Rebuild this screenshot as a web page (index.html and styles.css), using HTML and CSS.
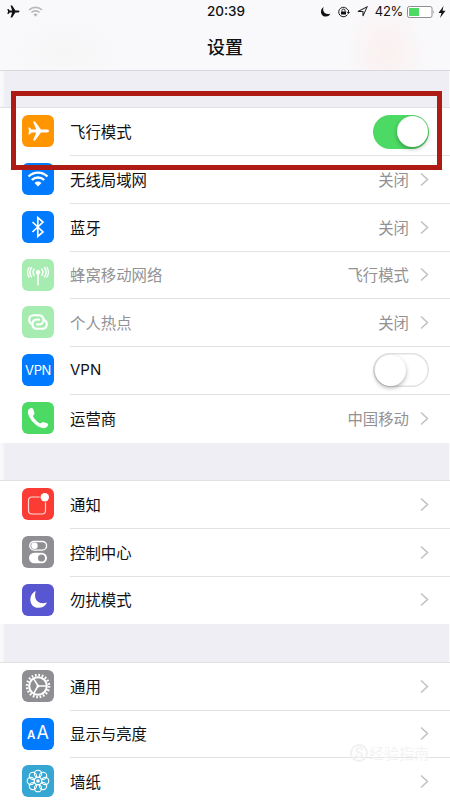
FILE: index.html
```html
<!DOCTYPE html>
<html lang="zh-CN">
<head>
<meta charset="utf-8">
<title>设置</title>
<link rel="stylesheet" href="styles.css">
</head>
<body>
<main class="screen">
  <header class="header">
    <div class="status">
      <div class="status-left">
        <svg class="st-plane" viewBox="0 0 24 24"><path d="M23 12c0-1-1-1.700-2.500-1.700h-5L9.500 1H6.500l3 9.300H5L2.800 7.500H.6L2 12 .6 16.500h2.200L5 13.700h4.500L6.500 23h3l6-9.300h5C22 13.700 23 13 23 12z"/></svg>
        <svg class="st-wifi" viewBox="0 0 24 18"><g fill="none" stroke="#b7b7b9" stroke-width="2.600"><path d="M1.500 6.500a15 15 0 0 1 21 0M5.300 10.700a9.500 9.500 0 0 1 13.400 0"/></g><path d="M8.500 14a5 5 0 0 1 7 0L12 17.500z" fill="#b7b7b9"/></svg>
      </div>
      <div class="time">20:39</div>
      <div class="status-right">
        <svg class="st-moon" viewBox="0 0 24 24"><path d="M8 2C-1 7 0 23 13 23c5 0 8-3 9.500-6C11 20 4 12 8 2z"/></svg>
        <svg class="st-lock" viewBox="0 0 24 24"><path d="M20.500 8A9.500 9.500 0 1 0 20 17M22 8v6M18.500 12l3.500 3 2-3" fill="none" stroke="#111" stroke-width="1.900"/><path d="M7 11h10v6H7z"/><path d="M9 11V9a3 3 0 0 1 6 0v2" fill="none" stroke="#111" stroke-width="1.800"/></svg>
        <svg class="st-loc" viewBox="0 0 24 24"><path d="M2 12 22 2 13 22v-10z" fill="none" stroke="#222" stroke-width="2.200"/></svg>
        <span class="percent">42%</span>
        <svg class="st-battery" viewBox="0 0 28 12"><rect x=".5" y=".5" width="24.500" height="11" rx="1.800" fill="#fff" stroke="#8e8e90"/><path d="M2 2h10v8H2z" fill="#4cd964"/><path d="M26 4q1.500 2 0 4z" fill="#8e8e90"/></svg>
        <svg class="st-bolt" viewBox="0 0 8 12"><path d="M5.500 0 .5 7H3.500L2 12 7.500 4.700H4.500z"/></svg>
      </div>
    </div>
    <h1>设置</h1>
  </header>

  <section class="group">
    <div class="row">
      <span class="icon orange"><svg viewBox="0 0 32 32"><path d="M27 16c0-.9-.9-1.400-2-1.400h-6L13 6.500h-2l3.200 8.100H9.500L7.700 12.500H6.300L7 16l-.7 3.500h1.400l1.800-2.100h4.700L11 25.500h2l6-8.100h6c1.100 0 2-.5 2-1.400z" fill="#fff"/></svg></span>
      <div class="cell"><span class="label">飞行模式</span><span class="switch on"></span></div>
    </div>
    <div class="row">
      <span class="icon blue"><svg viewBox="0 0 32 32"><g fill="none" stroke="#fff" stroke-width="2.400"><path d="M6.500 13.500a13.500 13.500 0 0 1 19 0M9.800 17a9 9 0 0 1 12.400 0"/></g><path d="M12.500 20a5 5 0 0 1 7 0L16 23.500z" fill="#fff"/></svg></span>
      <div class="cell"><span class="label">无线局域网</span><span class="value">关闭</span><svg class="chev" viewBox="0 0 9 14"><path d="m1 1 6.500 6L1 13"/></svg></div>
    </div>
    <div class="row">
      <span class="icon blue"><svg viewBox="0 0 32 32"><path d="m10.500 11 10.500 10-5.200 4.500V6.500l5.200 4.500L10.500 21" fill="none" stroke="#fff" stroke-width="1.700"/></svg></span>
      <div class="cell"><span class="label">蓝牙</span><span class="value">关闭</span><svg class="chev" viewBox="0 0 9 14"><path d="m1 1 6.500 6L1 13"/></svg></div>
    </div>
    <div class="row off">
      <span class="icon pale"><svg viewBox="0 0 32 32"><g fill="none" stroke="#fff" stroke-width="1.600"><path d="M16 14v12.500M12.500 9.800a5 5 0 0 0 0 6.900M19.500 9.800a5 5 0 0 1 0 6.900M9.900 8.300a7 7 0 0 0 0 9.900M22.100 8.300a7 7 0 0 1 0 9.900" /><path d="M7.400 7.800a9.500 9.500 0 0 0 0 10.900M24.600 7.800a9.500 9.500 0 0 1 0 10.900" stroke-width="1.300"/></g><circle cx="16" cy="13.200" r="2.200" fill="#fff"/></svg></span>
      <div class="cell"><span class="label">蜂窝移动网络</span><span class="value">飞行模式</span><svg class="chev" viewBox="0 0 9 14"><path d="m1 1 6.500 6L1 13"/></svg></div>
    </div>
    <div class="row off">
      <span class="icon pale"><svg viewBox="0 0 32 32"><g fill="none" stroke="#fff" stroke-width="2.100" stroke-linecap="round"><path d="M10.500 18.200a4.600 4.600 0 0 1 1.100-9h5.200a4.700 4.700 0 0 1 2.800 8.600q-1.200.8-4.600.6"/><path d="M21.500 13.800a4.600 4.600 0 0 1-1.100 9h-5.200a4.700 4.700 0 0 1-2.800-8.600q1.200-.8 4.600-.6"/></g></svg></span>
      <div class="cell"><span class="label">个人热点</span><span class="value">关闭</span><svg class="chev" viewBox="0 0 9 14"><path d="m1 1 6.500 6L1 13"/></svg></div>
    </div>
    <div class="row">
      <span class="icon blue vpn">VPN</span>
      <div class="cell"><span class="label latin">VPN</span><span class="switch"></span></div>
    </div>
    <div class="row">
      <span class="icon green"><svg viewBox="0 0 32 32"><path d="M8.300 6.200c1.200-.6 2.300-.2 2.900.9l1.100 3.300c.4 1.100.1 1.900-.6 2.500-.8.700-.8 1.300-.3 2.200 1.500 2.600 3.300 4.400 5.800 5.900.9.500 1.500.4 2.200-.2.700-.7 1.500-.8 2.500-.5l3.200 1c1.100.5 1.300 1.500.7 2.500-1.300 2.200-3.600 2.900-6.200 2C13.500 23.800 8.300 18.500 6.200 12c-.8-2.500-.2-4.700 2.100-5.800z" fill="#fff"/></svg></span>
      <div class="cell"><span class="label">运营商</span><span class="value">中国移动</span><svg class="chev" viewBox="0 0 9 14"><path d="m1 1 6.500 6L1 13"/></svg></div>
    </div>
  </section>

  <section class="group">
    <div class="row">
      <span class="icon red"><svg viewBox="0 0 32 32"><rect x="6.500" y="9" width="17" height="17" rx="3.500" fill="none" stroke="#fff" stroke-opacity=".8" stroke-width="1.200"/><circle cx="22.800" cy="9.300" r="5.200" fill="#fc3c34"/><circle cx="22.800" cy="9.300" r="4.200" fill="#fff"/></svg></span>
      <div class="cell"><span class="label">通知</span><svg class="chev" viewBox="0 0 9 14"><path d="m1 1 6.500 6L1 13"/></svg></div>
    </div>
    <div class="row">
      <span class="icon gray"><svg viewBox="0 0 32 32"><rect x="7.800" y="5.500" width="16.800" height="8.600" rx="4.300" fill="none" stroke="#fff" stroke-width="1.400"/><circle cx="12.500" cy="9.800" r="3.200" fill="#fff"/><rect x="7" y="16.800" width="18" height="10.400" rx="5.200" fill="#fff"/><circle cx="19.500" cy="22" r="3.500" fill="#8e8e93"/></svg></span>
      <div class="cell"><span class="label">控制中心</span><svg class="chev" viewBox="0 0 9 14"><path d="m1 1 6.500 6L1 13"/></svg></div>
    </div>
    <div class="row">
      <span class="icon purple"><svg viewBox="0 0 32 32"><path d="M13.800 7C6 10.500 6.500 23.800 16.500 23.800c4 0 7-2 8.500-5.300-8.500 3-14-3-11.200-11.500z" fill="#fff"/></svg></span>
      <div class="cell"><span class="label">勿扰模式</span><svg class="chev" viewBox="0 0 9 14"><path d="m1 1 6.500 6L1 13"/></svg></div>
    </div>
  </section>

  <section class="group">
    <div class="row">
      <span class="icon gray"><svg viewBox="0 0 32 32"><g fill="none" stroke="#fff"><circle cx="16" cy="16" r="11" stroke-width="2.600" stroke-dasharray="1.730 1.726"/><circle cx="16" cy="16" r="8.800" stroke-width="2"/><path d="M16 16h8.500M16 16l-4.300-7.400M16 16l-4.300 7.400" stroke-width="1.500"/></g><circle cx="16" cy="16" r="1.500" fill="#fff"/></svg></span>
      <div class="cell"><span class="label">通用</span><svg class="chev" viewBox="0 0 9 14"><path d="m1 1 6.500 6L1 13"/></svg></div>
    </div>
    <div class="row">
      <span class="icon blue letters"><b>A</b><span>A</span></span>
      <div class="cell"><span class="label">显示与亮度</span><svg class="chev" viewBox="0 0 9 14"><path d="m1 1 6.500 6L1 13"/></svg></div>
    </div>
    <div class="row">
      <span class="icon cyan"><svg viewBox="0 0 32 32"><g fill="none" stroke="#fff" stroke-width="1.100"><circle cx="16" cy="8.800" r="3.600"/><circle cx="21.100" cy="10.900" r="3.600"/><circle cx="23.200" cy="16" r="3.600"/><circle cx="21.100" cy="21.100" r="3.600"/><circle cx="16" cy="23.200" r="3.600"/><circle cx="10.900" cy="21.100" r="3.600"/><circle cx="8.800" cy="16" r="3.600"/><circle cx="10.900" cy="10.900" r="3.600"/><circle cx="16" cy="16" r="3.800"/></g><circle cx="16" cy="16" r="1.800" fill="#fff"/></svg></span>
      <div class="cell"><span class="label">墙纸</span><svg class="chev" viewBox="0 0 9 14"><path d="m1 1 6.500 6L1 13"/></svg></div>
    </div>
  </section>
  <div class="highlight"></div>
  <div class="watermark"><span class="mark">S</span><span>经验指南</span></div>
</main>
</body>
</html>
```
FILE: styles.css
```css
* { box-sizing: border-box; }
body { margin: 0; background: #fff; }
.screen {
  position: relative;
  width: 450px;
  height: 800px;
  overflow: hidden;
  background: linear-gradient(90deg, #f9f9fb 2px, #efeef4 5px, #efeef4 449px, #fafafc 449px);
  font-family: "Noto Sans CJK SC", sans-serif;
  color: #111;
}
.header {
  height: 71px;
  border-bottom: 1px solid #d8d8dc;
  background: radial-gradient(ellipse 44px 60px at 386px 54px, #fbf0f0, rgba(251, 240, 240, 0)), radial-gradient(ellipse 60px 40px at 65px 52px, #f6f6f7, rgba(246, 246, 247, 0)), #f9f9fb;
}
.status {
  display: grid;
  grid-template-columns: 1fr 40px 1fr;
  align-items: center;
  height: 23px;
  padding: 0 4px 0 6px;
}
.status svg { display: block; fill: #111; }
.status-left, .status-right { display: flex; align-items: center; }
.status-left { gap: 7px; }
.status-right { justify-content: flex-end; }
.st-plane { width: 15px; height: 13px; }
.st-wifi { width: 15px; height: 11px; }
.time { font: 500 13.5px/23px Inter, sans-serif; text-align: center; white-space: nowrap; }
.st-moon { width: 11px; height: 11px; margin-right: 6px; }
.st-lock { width: 13px; height: 12px; margin-right: 7px; }
.st-loc { width: 11px; height: 11px; margin-right: 7px; }
.percent { font: 13px/23px Inter, sans-serif; letter-spacing: -.3px; margin-right: 4px; }
.st-battery { width: 28px; height: 12px; margin-right: 3px; }
.st-bolt { width: 8px; height: 12px; }
h1 { margin: 0; font-size: 18px; line-height: 46px; font-weight: 500; text-align: center; }
.group {
  margin-top: 36.3px;
  background: #fff;
  border-top: 1px solid #e0e0e5;
}
.group + .group { margin-top: 37.5px; }
.row { display: flex; height: 47.75px; padding-left: 22px; }
.icon {
  display: flex;
  flex: none;
  justify-content: center;
  align-items: center;
  width: 32px;
  height: 32px;
  margin: 7px 16px 0 0;
  border-radius: 6px;
  color: #fff;
}
.icon svg { width: 32px; height: 32px; }
.orange { background: #ff9500; }
.blue { background: #007aff; }
.pale { background: #a6ecb1; }
.green { background: #4cd964; }
.red { background: #fc3c34; }
.gray { background: #8e8e93; }
.purple { background: #5856d0; }
.cyan { background: #36a7d2; }
.vpn { font: 13px/32px Inter, sans-serif; letter-spacing: -.4px; }
.letters { align-items: baseline; gap: 1px; font: 18px/29px Inter, sans-serif; }
.letters b { font-size: 11.5px; font-weight: 600; }
.cell {
  display: flex;
  flex: 1;
  align-items: center;
  padding-right: 21px;
  border-bottom: 1px solid #e2e2e4;
}
.row:last-child .cell { border-bottom-color: transparent; }
.label { flex: 1; font-size: 15.4px; line-height: 24px; padding-bottom: 1px; }
.latin { font-family: Inter, sans-serif; font-size: 15px; padding: 0; }
.value { font-size: 15.4px; line-height: 24px; color: #929295; margin-right: 11px; padding-bottom: 1px; }
.off .label { color: #929295; }
.chev { width: 9px; height: 15px; fill: none; stroke: #c2c2c6; stroke-width: 1.6; }
.switch {
  display: flex;
  width: 56px;
  height: 34px;
  padding: 1.5px;
  border-radius: 17px;
  background: #fff;
  box-shadow: inset 0 0 0 1.5px #e1e1e3;
}
.switch::before {
  content: "";
  width: 31px;
  height: 31px;
  border-radius: 50%;
  background: #fff;
  box-shadow: 0 2px 4px rgba(0, 0, 0, .3);
}
.switch.on { justify-content: flex-end; background: #4cd964; box-shadow: none; }
.highlight {
  position: absolute;
  left: 11px;
  top: 91px;
  width: 431px;
  height: 79px;
  border: 5px solid #ae1b14;
}
.watermark {
  position: absolute;
  left: 350px;
  top: 744px;
  display: flex;
  align-items: center;
  gap: 1px;
  font-size: 15px;
  line-height: 18px;
  color: #f3f3f4;
}
.mark {
  width: 18px;
  height: 18px;
  border: 2px solid #f1f1f2;
  border-radius: 50%;
  font: bold 14px/14px Inter, sans-serif;
  text-align: center;
}
```
